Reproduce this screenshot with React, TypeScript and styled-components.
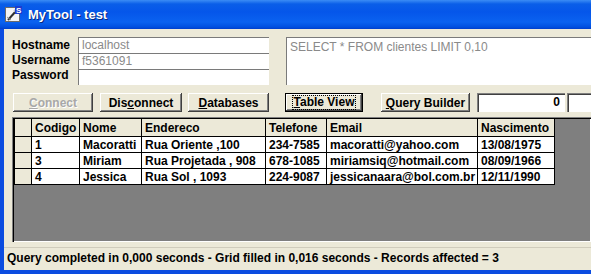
import styled, { createGlobalStyle } from "styled-components";

const GlobalStyle = createGlobalStyle`
  html, body {
    margin: 0;
    padding: 0;
    background: #ece9d8;
  }
  * {
    box-sizing: border-box;
  }
`;

const columns = [
  { title: "Codigo", width: 48 },
  { title: "Nome", width: 62 },
  { title: "Endereco", width: 124 },
  { title: "Telefone", width: 61 },
  { title: "Email", width: 151 },
  { title: "Nascimento", width: 77 },
];

const rows = [
  ["1", "Macoratti", "Rua Oriente ,100", "234-7585", "macoratti@yahoo.com", "13/08/1975"],
  ["3", "Miriam", "Rua Projetada , 908", "678-1085", "miriamsiq@hotmail.com", "08/09/1966"],
  ["4", "Jessica", "Rua Sol , 1093", "224-9087", "jessicanaara@bol.com.br", "12/11/1990"],
];

function AppIcon() {
  return (
    <svg width="17" height="17" viewBox="0 0 17 17">
      <rect x="0.5" y="1.5" width="14" height="14" fill="#f4f4f4" stroke="#6b6b6b" />
      <path d="M3 14 L11 5" stroke="#303030" strokeWidth="2" />
      <path d="M2 11 L6 14" stroke="#909090" strokeWidth="1" />
      <path d="M9 4 L12 7" stroke="#c0c0c0" strokeWidth="2" />
      <rect x="10" y="0" width="7" height="8" fill="#1c3ccf" />
      <text x="11" y="7" fontSize="8" fontWeight="bold" fill="#fff" fontFamily="Liberation Sans, sans-serif">
        S
      </text>
    </svg>
  );
}

export default function App() {
  return (
    <>
      <GlobalStyle />
      <Window>
        <TitleBar>
          <AppIcon />
          <Title>MyTool - test</Title>
        </TitleBar>
        <Client>
          <ConnRow>
            <Labels>
              <Label>Hostname</Label>
              <Label>Username</Label>
              <Label>Password</Label>
            </Labels>
            <Inputs>
              <Field>localhost</Field>
              <Field>f5361091</Field>
              <Field />
            </Inputs>
            <SqlBox>SELECT * FROM clientes LIMIT 0,10</SqlBox>
          </ConnRow>

          <ButtonRow>
            <Button $w={80} $disabled>
              <u>C</u>onnect
            </Button>
            <Button $w={82} $ml={7}>
              Dis<u>c</u>onnect
            </Button>
            <Button $w={81} $ml={6}>
              <u>D</u>atabases
            </Button>
            <Button $w={78} $ml={16} $default>
              <Focus>
                <u>T</u>able View
              </Focus>
            </Button>
            <Button $w={89} $ml={18}>
              <u>Q</u>uery Builder
            </Button>
            <NumBox $w={88} $ml={7}>0</NumBox>
            <NumBox $w={40} $ml={2} />
          </ButtonRow>

          <GridFrame>
            <Table>
              <thead>
                <tr>
                  <Indicator />
                  {columns.map((c) => (
                    <HeadCell key={c.title} style={{ width: c.width }}>
                      {c.title}
                    </HeadCell>
                  ))}
                </tr>
              </thead>
              <tbody>
                {rows.map((r) => (
                  <tr key={r[0]}>
                    <Indicator />
                    {r.map((v, i) => (
                      <Cell key={i}>{v}</Cell>
                    ))}
                  </tr>
                ))}
              </tbody>
            </Table>
          </GridFrame>

          <StatusBar>
            Query completed in 0,000 seconds - Grid filled in 0,016 seconds - Records affected = 3
          </StatusBar>
        </Client>
      </Window>
    </>
  );
}

const Window = styled.div`
  width: 591px;
  height: 274px;
  display: flex;
  flex-direction: column;
  overflow: hidden;
  font-family: "Liberation Sans", Arial, sans-serif;
`;

const TitleBar = styled.div`
  height: 29px;
  flex: none;
  display: flex;
  align-items: center;
  gap: 6px;
  padding-left: 5px;
  padding-bottom: 1px;
  background: linear-gradient(
    180deg,
    #3b8cf5 0px,
    #0a5ee8 4px,
    #0556ea 12px,
    #0a62f0 22px,
    #0050e0 27px,
    #003ecb 29px
  );
`;

const Title = styled.span`
  color: #fff;
  font-size: 13px;
  font-weight: bold;
  text-shadow: 1px 1px #0a2a80;
`;

const Client = styled.div`
  flex: 1;
  display: flex;
  flex-direction: column;
  background: #ece9d8;
  border-left: 4px solid #0b4ce0;
  border-bottom: 4px solid #0b4ce0;
  padding-top: 8px;
  min-height: 0;
`;

const ConnRow = styled.div`
  display: flex;
  align-items: flex-start;
  padding-left: 8px;
`;

const Labels = styled.div`
  width: 66px;
  display: flex;
  flex-direction: column;
  padding-top: 1px;
`;

const Label = styled.div`
  height: 15px;
  line-height: 15px;
  font-size: 12px;
  font-weight: bold;
  color: #000;
`;

const Inputs = styled.div`
  width: 191px;
  display: flex;
  flex-direction: column;
`;

const Field = styled.div`
  height: 16px;
  background: #fff;
  border-top: 1px solid #7a7a7a;
  border-left: 1px solid #7a7a7a;
  padding-left: 3px;
  font-size: 12px;
  line-height: 15px;
  color: #8a8a8a;
`;

const SqlBox = styled.div`
  flex: 1;
  height: 48px;
  margin-left: 17px;
  background: #fff;
  border-top: 1px solid #7a7a7a;
  border-left: 1px solid #7a7a7a;
  padding: 2px 3px;
  font-size: 12px;
  color: #8a8a8a;
`;

const ButtonRow = styled.div`
  display: flex;
  align-items: center;
  margin-top: 8px;
  padding-left: 9px;
  height: 19px;
`;

const Button = styled.div<{ $w: number; $ml?: number; $disabled?: boolean; $default?: boolean }>`
  flex: none;
  width: ${(p) => p.$w}px;
  height: 19px;
  margin-left: ${(p) => p.$ml ?? 0}px;
  display: flex;
  align-items: center;
  justify-content: center;
  background: #ece9d8;
  font-size: 12px;
  font-weight: bold;
  color: ${(p) => (p.$disabled ? "#a8a8a8" : "#000")};
  text-shadow: ${(p) => (p.$disabled ? "1px 1px #fff" : "none")};
  border: ${(p) => (p.$default ? "1px solid #000" : "none")};
  box-shadow: inset -1px -1px #404040, inset 1px 1px #fff, inset -2px -2px #808080;
`;

const Focus = styled.span`
  padding: 0 1px;
  outline: 1px dotted #000;
  line-height: 13px;
`;

const NumBox = styled.div<{ $w: number; $ml?: number }>`
  flex: none;
  width: ${(p) => p.$w}px;
  height: 19px;
  margin-left: ${(p) => p.$ml ?? 0}px;
  background: #fff;
  box-shadow: inset 1px 1px #808080, inset 2px 2px #404040;
  text-align: right;
  padding-right: 5px;
  font-size: 12px;
  font-weight: bold;
  line-height: 19px;
`;

const GridFrame = styled.div`
  flex: 1;
  margin: 5px 0 0 8px;
  background: #7f7f7f;
  box-shadow: inset 1px 1px #808080, inset 2px 2px #000, inset -1px -1px #fff;
  padding: 1px 0 0 2px;
  min-height: 0;
`;

const Table = styled.table`
  border-collapse: collapse;
  table-layout: fixed;
  font-size: 12px;
  font-weight: bold;
  color: #000;
`;

const Indicator = styled.td`
  width: 17px;
  height: 16px;
  padding: 0;
  background: #ece9d8;
  border: 1px solid #000;
`;

const HeadCell = styled.th`
  height: 18px;
  padding: 0 0 0 3px;
  text-align: left;
  background: #ece9d8;
  border: 1px solid #000;
  font-weight: bold;
  white-space: nowrap;
`;

const Cell = styled.td`
  height: 16px;
  padding: 0 0 0 3px;
  background: #fff;
  border: 1px solid #000;
  white-space: nowrap;
  overflow: hidden;
  line-height: 14px;
`;

const StatusBar = styled.div`
  flex: none;
  height: 23px;
  margin-top: 5px;
  border-top: 1px solid #d0ccbc;
  padding-left: 3px;
  font-size: 12px;
  font-weight: bold;
  line-height: 21px;
  white-space: nowrap;
`;
